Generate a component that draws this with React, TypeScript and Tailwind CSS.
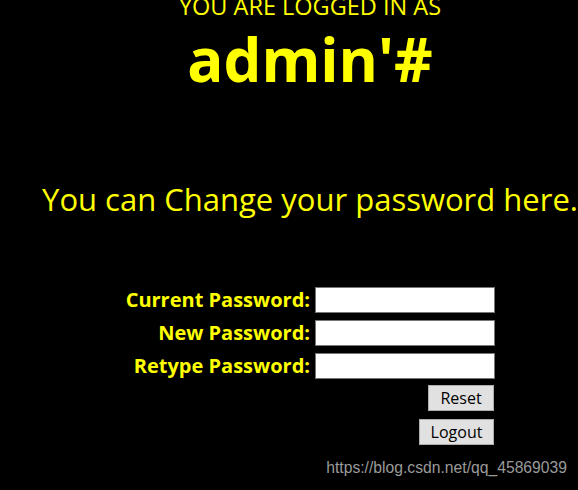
const font = { fontFamily: '"Open Sans", "Noto Sans", sans-serif' };

function Field({ label }: { label: string }) {
  return (
    <div className="flex h-[33px] items-center">
      <label className="w-[190px] pr-[5px] text-right text-[20px] font-bold text-[#ffff00]">{label}</label>
      <input
        type="password"
        className="h-[26px] w-[180px] border border-[#767676] bg-white"
      />
    </div>
  );
}

export default function App() {
  return (
    <div className="relative h-[490px] w-[578px] overflow-hidden bg-black" style={font}>
      <div className="w-[620px] text-center text-[#ffff00]">
        <p className="mt-[-8px] text-[23.5px] leading-[28px]">YOU ARE LOGGED IN AS</p>
        <h1 className="mt-[9px] text-[60px] font-bold leading-[60px]">admin'#</h1>
        <p className="mt-[90px] text-[31px] leading-[40px]">You can Change your password here.</p>

        <div className="mx-auto mt-[64px] flex w-[370px] flex-col">
          <Field label="Current Password:" />
          <Field label="New Password:" />
          <Field label="Retype Password:" />
          <div className="flex flex-col items-end gap-[8px] pt-[3px]">
            <button className="mr-[1px] h-[26px] w-[66px] border border-[#adadad] bg-[#e1e1e1] text-[16px] leading-none text-black">
              Reset
            </button>
            <button className="mr-[1px] h-[26px] w-[75px] border border-[#adadad] bg-[#e1e1e1] text-[16px] leading-none text-black">
              Logout
            </button>
          </div>
        </div>
      </div>

      <span
        className="absolute bottom-[10px] right-[11px] text-[15.7px] text-[#9a9a9a]"
        style={{ fontFamily: '"Liberation Sans", Arial, sans-serif' }}
      >
        https://blog.csdn.net/qq_45869039
      </span>
    </div>
  );
}
